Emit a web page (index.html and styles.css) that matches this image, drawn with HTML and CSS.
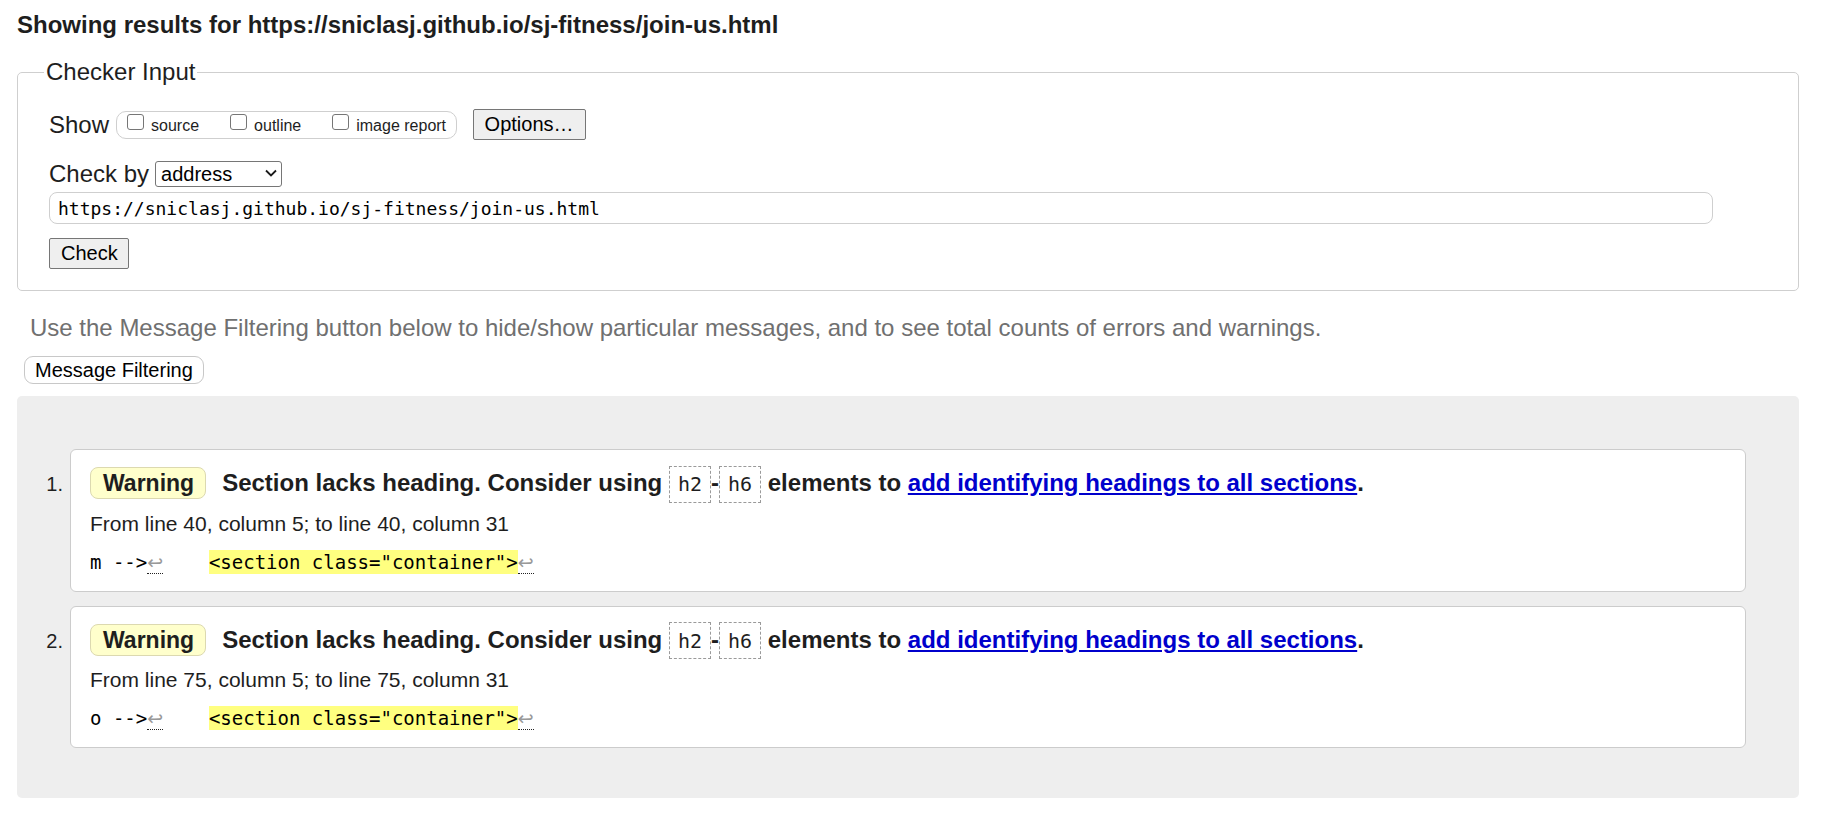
FILE: index.html
```html
<!DOCTYPE html>
<html lang="en">
<head>
<meta charset="utf-8">
<title>Showing results for https://sniclasj.github.io/sj-fitness/join-us.html</title>
<link rel="stylesheet" href="styles.css">
</head>
<body>
<div class="page">
  <h1 class="title">Showing results for https://sniclasj.github.io/sj-fitness/join-us.html</h1>

  <fieldset class="checker">
    <legend class="legend">Checker Input</legend>
    <div class="row row-show">
      <span class="lbl">Show</span>
      <span class="opts">
        <label class="opt"><input type="checkbox" class="cb"><span class="opt-text">source</span></label>
        <label class="opt"><input type="checkbox" class="cb"><span class="opt-text">outline</span></label>
        <label class="opt"><input type="checkbox" class="cb"><span class="opt-text">image report</span></label>
      </span>
      <button class="btn options" type="button">Options…</button>
    </div>
    <div class="row row-by">
      <span class="lbl">Check by</span>
      <span class="sel-wrap">
        <select class="sel"><option>address</option></select>
        <svg class="chev" viewBox="0 0 12 8" width="12" height="8"><polyline points="1,1.5 6,6.5 11,1.5" fill="none" stroke="#1a1a1a" stroke-width="1.8"/></svg>
      </span>
    </div>
    <input class="url" type="text" value="https://sniclasj.github.io/sj-fitness/join-us.html">
    <div class="check-row"><button class="btn check" type="button">Check</button></div>
  </fieldset>

  <p class="hint">Use the Message Filtering button below to hide/show particular messages, and to see total counts of errors and warnings.</p>
  <button class="filter" type="button">Message Filtering</button>

  <div class="results">
    <ol class="msgs">
      <li class="item">
        <span class="num">1.</span>
        <div class="box">
          <p class="msg"><span class="badge">Warning</span>Section lacks heading. Consider using <code class="code">h2</code>-<code class="code">h6</code> elements to <a class="link" href="#">add identifying headings to all sections</a>.</p>
          <p class="from">From line 40, column 5; to line 40, column 31</p>
          <p class="src">m --&gt;<b class="lf">↩</b>    <mark class="hl">&lt;section class="container"&gt;</mark><b class="lf">↩</b></p>
        </div>
      </li>
      <li class="item">
        <span class="num">2.</span>
        <div class="box">
          <p class="msg"><span class="badge">Warning</span>Section lacks heading. Consider using <code class="code">h2</code>-<code class="code">h6</code> elements to <a class="link" href="#">add identifying headings to all sections</a>.</p>
          <p class="from">From line 75, column 5; to line 75, column 31</p>
          <p class="src">o --&gt;<b class="lf">↩</b>    <mark class="hl">&lt;section class="container"&gt;</mark><b class="lf">↩</b></p>
        </div>
      </li>
    </ol>
  </div>
</div>
</body>
</html>
```

FILE: styles.css
```css
html, body {
  margin: 0;
  padding: 0;
  background: #fff;
  color: #1e1e1e;
  font-family: "Liberation Sans", Arial, sans-serif;
}

.page {
  padding: 0 26px 0 17px;
}

.title {
  margin: 0;
  padding-top: 11px;
  font-size: 24px;
  line-height: 28px;
  font-weight: bold;
}

/* Checker input fieldset */
.checker {
  margin: 19px 0 0;
  padding: 0 30px 21px 31px;
  border: 1px solid #cfcfcf;
  border-radius: 5px;
  min-width: 0;
}

.legend {
  padding: 0 2px;
  margin-left: -5px;
  font-size: 24px;
  line-height: 28px;
}

.row {
  display: flex;
  align-items: center;
}

.row-show {
  margin-top: 23px;
  height: 31px;
}

.lbl {
  font-size: 24px;
  line-height: 28px;
}

.opts {
  display: flex;
  align-items: center;
  box-sizing: border-box;
  height: 28px;
  margin-left: 7px;
  padding: 0 10px 0 10px;
  border: 1px solid #cfcfcf;
  border-radius: 10px;
}

.opt {
  display: flex;
  align-items: center;
  font-size: 16px;
  line-height: 18px;
  margin-right: 31px;
}

.opt:last-child {
  margin-right: 0;
}

.cb {
  appearance: none;
  -webkit-appearance: none;
  box-sizing: border-box;
  width: 16.5px;
  height: 16.5px;
  margin: 0 7.5px 5px 0;
  border: 1px solid #767676;
  border-radius: 3px;
  background: #fff;
}

.opt-text {
  margin-top: 2px;
}

.btn {
  box-sizing: border-box;
  height: 31px;
  font-family: "Liberation Sans", Arial, sans-serif;
  font-size: 20px;
  line-height: 23px;
  color: #000;
  background: #efefef;
  border: 1px solid #767676;
  border-radius: 2px;
  padding: 3px 11px;
}

.options {
  margin-left: 15.5px;
  width: 113px;
}

.check {
  width: 80px;
}

.row-by {
  margin-top: 21px;
  height: 26px;
}

.sel-wrap {
  position: relative;
  display: inline-block;
  height: 26px;
  margin-left: 6px;
}

.sel {
  appearance: none;
  -webkit-appearance: none;
  box-sizing: border-box;
  width: 127px;
  height: 26px;
  padding: 0 0 0 5px;
  font-family: "Liberation Sans", Arial, sans-serif;
  font-size: 20px;
  color: #000;
  background: #fff;
  border: 1px solid #767676;
  border-radius: 3px;
}

.chev {
  position: absolute;
  right: 5px;
  top: 8px;
  pointer-events: none;
}

.url {
  display: block;
  box-sizing: border-box;
  width: calc(100% - 55px);
  height: 32px;
  margin: 5px 0 0;
  padding: 0 8px;
  font-family: "DejaVu Sans Mono", monospace;
  font-size: 18px;
  color: #000;
  background: #fff;
  border: 1px solid #cfcfcf;
  border-radius: 8px;
}

.check-row {
  margin-top: 13.5px;
}

/* Hint + filtering */
.hint {
  margin: 23px 0 0 13px;
  font-size: 24px;
  line-height: 28px;
  color: #707070;
}

.filter {
  display: block;
  box-sizing: border-box;
  height: 28px;
  margin: 14px 0 0 7px;
  padding: 0 10px;
  font-family: "Liberation Sans", Arial, sans-serif;
  font-size: 20px;
  line-height: 26px;
  color: #000;
  background: #fff;
  border: 1px solid #c8c8c8;
  border-radius: 9px;
}

/* Results */
.results {
  margin-top: 12.5px;
  padding: 53px 53px 50px 0;
  background: #eeeeee;
  border-radius: 5px;
}

.msgs {
  list-style: none;
  margin: 0;
  padding: 0;
  display: flex;
  flex-direction: column;
  gap: 14px;
}

.item {
  display: flex;
}

.num {
  flex: none;
  box-sizing: border-box;
  width: 53px;
  padding: 23px 7px 0 0;
  text-align: right;
  font-size: 20px;
  line-height: 24px;
}

.box {
  flex: 1;
  background: #fff;
  border: 1px solid #cccccc;
  border-radius: 6px;
  padding: 14px 18px 17px 19px;
}

.msg {
  margin: 0;
  font-size: 24px;
  font-weight: bold;
  line-height: 37px;
}

.badge {
  display: inline-block;
  font-size: 23px;
  line-height: 26px;
  padding: 2px 11px 2px 12px;
  margin-right: 16px;
  background: #ffffcc;
  border: 1px solid #dcd9b0;
  border-radius: 8px;
}

.code {
  display: inline-block;
  font-family: "DejaVu Sans Mono", monospace;
  font-size: 20px;
  font-weight: normal;
  line-height: 24px;
  padding: 5.5px 8px;
  border: 1px dashed #9a9a9a;
}

.link {
  color: #0000cc;
  text-decoration: underline;
}

.from {
  margin: 9px 0 0;
  font-size: 21px;
  line-height: 24px;
}

.src {
  margin: 14px 0 0;
  font-family: "DejaVu Sans Mono", monospace;
  font-size: 19px;
  line-height: 24px;
  white-space: pre;
  color: #000;
}

.hl {
  background: #ffff80;
  color: #000;
  padding: 1px 0;
}

.lf {
  font-family: "DejaVu Sans", sans-serif;
  font-weight: normal;
  color: #999;
  border-bottom: 1px dotted #222;
}
```
